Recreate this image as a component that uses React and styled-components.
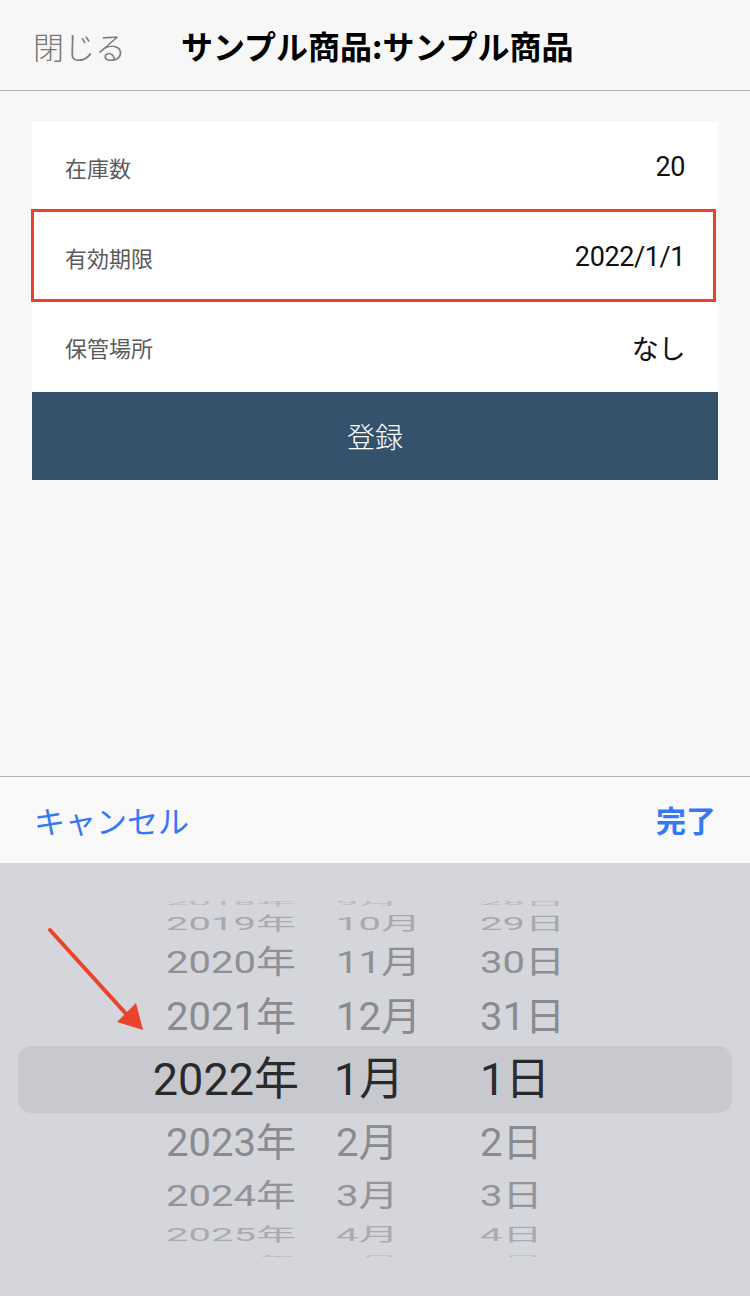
import React from "react";
import styled, { createGlobalStyle } from "styled-components";

const GlobalStyle = createGlobalStyle`
  html, body {
    margin: 0;
    padding: 0;
    background: #f7f7f7;
  }
  body {
    font-family: Roboto, "Noto Sans CJK JP", sans-serif;
    -webkit-font-smoothing: antialiased;
  }
`;

const Screen = styled.div`
  width: 750px;
  height: 1296px;
  display: flex;
  flex-direction: column;
  background: #f7f7f7;
  overflow: hidden;
  position: relative;
`;

const Header = styled.header`
  height: 90px;
  flex: none;
  display: flex;
  align-items: center;
  padding: 0 33px;
  gap: 55px;
  border-bottom: 1px solid #b3b3b3;
  background: #f7f7f7;
  box-sizing: content-box;
`;

const CloseButton = styled.span`
  font-family: "Noto Sans CJK JP", sans-serif;
  font-size: 31px;
  color: #787878;
  font-weight: 300;
`;

const Title = styled.h1`
  margin: 0;
  font-family: "Noto Sans CJK JP", sans-serif;
  font-size: 32px;
  font-weight: 700;
  color: #000;
`;

const Content = styled.main`
  flex: 1;
  padding: 31px 32px 0;
`;

const Card = styled.section`
  background: #fff;
  display: flex;
  flex-direction: column;
`;

const Row = styled.div`
  height: 90px;
  display: flex;
  align-items: center;
  justify-content: space-between;
  padding: 0 33px;
  position: relative;

  ${(p) =>
    p.$marked &&
    `
    &::after {
      content: "";
      position: absolute;
      top: -3px;
      bottom: 0;
      left: -1px;
      right: 2px;
      border: 3px solid #e9442b;
      pointer-events: none;
    }
  `}
`;

const Label = styled.span`
  font-family: "Noto Sans CJK JP", sans-serif;
  font-size: 22px;
  color: #5a5a5a;
`;

const Value = styled.span`
  font-family: Roboto, "Noto Sans CJK JP", sans-serif;
  font-size: 27px;
  color: #111;
  letter-spacing: -0.4px;
`;

const SubmitButton = styled.button`
  height: 88px;
  border: none;
  background: #34526b;
  color: #fff;
  font-family: "Noto Sans CJK JP", sans-serif;
  font-size: 28px;
  font-weight: 300;
  cursor: pointer;
`;

const Toolbar = styled.div`
  height: 87px;
  flex: none;
  display: flex;
  align-items: center;
  justify-content: space-between;
  padding: 0 34px 2px;
  box-sizing: border-box;
  border-top: 1px solid #b0b0b0;
  background: #f9f9f9;
`;

const ToolbarButton = styled.span`
  font-family: "Noto Sans CJK JP", sans-serif;
  font-size: ${(p) => (p.$strong ? 30 : 31)}px;
  color: #3478f6;
  font-weight: ${(p) => (p.$strong ? 700 : 400)};
`;

const Picker = styled.div`
  height: 433px;
  flex: none;
  background: #d5d6db;
  padding-top: 38px;
  box-sizing: border-box;
  position: relative;
`;

const Wheel = styled.div`
  height: 356px;
  overflow: hidden;
`;

const WheelTrack = styled.div`
  margin-top: -7px;
  display: flex;
  flex-direction: column;
`;

const WheelRow = styled.div`
  flex: none;
  display: flex;
  align-items: center;
  margin: 0 ${(p) => (p.$selected ? 18 : 0)}px;
  border-radius: ${(p) => (p.$selected ? 14 : 0)}px;
  background: ${(p) => (p.$selected ? "#c8c9ce" : "transparent")};
`;

const Cells = styled.div`
  display: grid;
  grid-template-columns: 296px 40px 144px 1fr;
  width: 750px;
  margin-left: ${(p) => (p.$selected ? -18 : 0)}px;
  font-family: Roboto, "Noto Sans CJK JP", sans-serif;
  font-size: ${(p) => (p.$selected ? 45 : 40)}px;
  line-height: 1;
  color: ${(p) => p.$color};
  white-space: nowrap;
`;

const YearCell = styled.span`
  grid-column: 1;
  text-align: right;
  margin-right: ${(p) => (p.$selected ? -3 : 0)}px;
`;

const MonthCell = styled.span`
  grid-column: 3;
  margin-left: ${(p) => (p.$selected ? -2 : 0)}px;
`;

const DayCell = styled.span`
  grid-column: 4;
`;

const Arrow = styled.svg`
  position: absolute;
  left: 44px;
  top: 62px;
  pointer-events: none;
`;

const fields = [
  { label: "在庫数", value: "20" },
  { label: "有効期限", value: "2022/1/1", marked: true },
  { label: "保管場所", value: "なし" },
];

const wheelRows = [
  { y: "2018年", m: "9月", d: "28日", h: 16, s: 0.2, c: "#b9b9be" },
  { y: "2019年", m: "10月", d: "29日", h: 28, s: 0.45, c: "#a8a8ad" },
  { y: "2020年", m: "11月", d: "30日", h: 50, s: 0.8, c: "#8f8f94" },
  { y: "2021年", m: "12月", d: "31日", h: 58, s: 0.97, c: "#8a8a8f" },
  { y: "2022年", m: "1月", d: "1日", h: 67, s: 1, c: "#2a2a2c", selected: true },
  { y: "2023年", m: "2月", d: "2日", h: 60, s: 0.97, c: "#8a8a8f" },
  { y: "2024年", m: "3月", d: "3日", h: 46, s: 0.76, c: "#939398" },
  { y: "2025年", m: "4月", d: "4日", h: 32, s: 0.45, c: "#aaaaaf" },
  { y: "2026年", m: "5月", d: "5日", h: 16, s: 0.2, c: "#b9b9be" },
];

export default function App() {
  return (
    <>
      <GlobalStyle />
      <Screen>
        <Header>
          <CloseButton>閉じる</CloseButton>
          <Title>サンプル商品:サンプル商品</Title>
        </Header>

        <Content>
          <Card>
            {fields.map((f) => (
              <Row key={f.label} $marked={f.marked}>
                <Label>{f.label}</Label>
                <Value>{f.value}</Value>
              </Row>
            ))}
            <SubmitButton>登録</SubmitButton>
          </Card>
        </Content>

        <Toolbar>
          <ToolbarButton>キャンセル</ToolbarButton>
          <ToolbarButton $strong>完了</ToolbarButton>
        </Toolbar>

        <Picker>
          <Wheel>
            <WheelTrack>
              {wheelRows.map((r) => (
                <WheelRow key={r.y} $selected={r.selected} style={{ height: r.h }}>
                  <Cells
                    $selected={r.selected}
                    $color={r.c}
                    style={{ transform: `scaleY(${r.s})` }}
                  >
                    <YearCell $selected={r.selected}>{r.y}</YearCell>
                    <MonthCell $selected={r.selected}>{r.m}</MonthCell>
                    <DayCell>{r.d}</DayCell>
                  </Cells>
                </WheelRow>
              ))}
            </WheelTrack>
          </Wheel>
          <Arrow width="110" height="110" viewBox="0 0 110 110">
            <line x1="6" y1="5" x2="85" y2="92" stroke="#e9442b" strokeWidth="4" strokeLinecap="round" />
            <polygon points="99,105 73,97 92,78" fill="#e9442b" />
          </Arrow>
        </Picker>
      </Screen>
    </>
  );
}
